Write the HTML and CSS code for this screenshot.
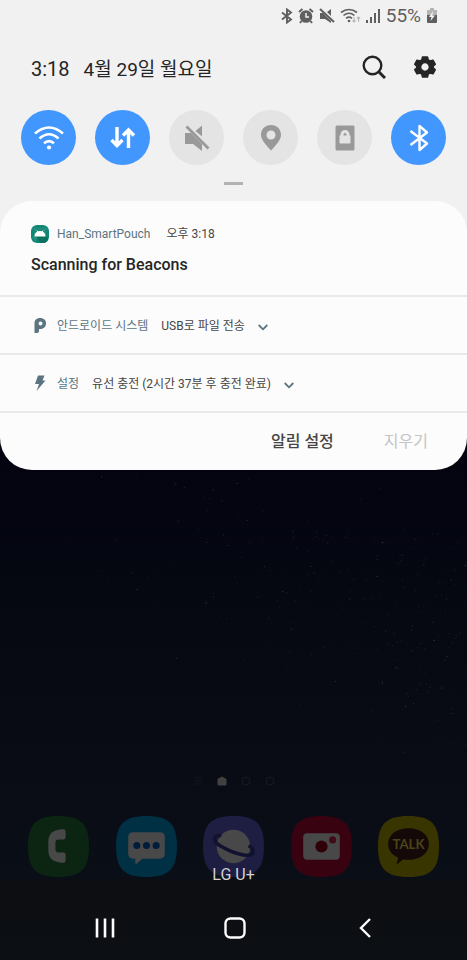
FILE: index.html
```html
<!DOCTYPE html>
<html lang="ko">
<head>
<meta charset="utf-8">
<meta name="viewport" content="width=device-width, initial-scale=1">
<title>알림</title>
<link rel="stylesheet" href="styles.css">
</head>
<body>
<header class="panel">
  <div class="status">
    <svg width="12" height="16" viewBox="0 0 12 16" fill="none" stroke="currentColor" stroke-width="1.9"><path d="M1 4.5 10 11.5 6 14.5V1.5L10 4.5 1 11.5"/></svg>
    <svg width="16" height="16" viewBox="0 0 16 16"><circle cx="8" cy="8.500" r="6.300" fill="currentColor"/><path d="M1 4 4.500 1M15 4 11.500 1M3.500 13 2 15M12.500 13 14 15" stroke="currentColor" stroke-width="2"/><path d="M8 5V9H11" fill="none" stroke="#f1f1f1" stroke-width="1.500"/></svg>
    <svg width="16" height="16" viewBox="0 0 16 16"><path d="M1 5H4L12 13V15L6 11H1ZM8 4 12 1V8Z" fill="currentColor"/><path d="M1 1 15 14" stroke="currentColor" stroke-width="2"/></svg>
    <svg width="21" height="16" viewBox="0 0 21 16" fill="none" stroke="currentColor" stroke-width="1.600"><path d="M1 4.500Q9 -1.500 17 4.500M3.500 7.500Q9 3 14.500 7.500M6 10.300Q9 8 12 10.300"/><circle cx="9" cy="13" r="1.300" fill="currentColor" stroke="none"/><path class="faint" stroke-width="1.100" d="M14 9V14M12.500 12.500 14 14 15.500 12.500M18.500 14V9M17 10.500 18.500 9 20 10.500"/></svg>
    <svg width="15" height="16" viewBox="0 0 15 16" fill="currentColor"><path d="M0 12H2V15H0ZM4 9H6V15H4ZM8 5H10V15H8ZM12 1H14V15H12Z"/></svg>
    <span class="battery-level">55%</span>
    <svg width="12" height="16" viewBox="0 0 12 16"><path class="faint-fill" d="M4 0H8V2H11V8H1V2H4Z"/><path fill="currentColor" d="M1 7H11V14Q11 15 10 15H2Q1 15 1 14Z"/><path d="M7 3 3 9H5.500L4.500 13 9 7.500H6.500Z" fill="#f1f1f1"/></svg>
  </div>
  <div class="clock-row">
    <div class="clock-text">
      <time class="clock">3:18</time>
      <span class="date">4월 29일 월요일</span>
    </div>
    <button class="tool" aria-label="검색"><svg width="24" height="24" viewBox="0 0 24 24" fill="none" stroke="currentColor"><circle cx="10.500" cy="10.500" r="8.800" stroke-width="2.400"/><path d="M17 17 23 23" stroke-width="3"/></svg></button>
    <button class="tool" aria-label="설정"><svg width="24" height="24" viewBox="0 0 24 24"><path fill="currentColor" stroke="currentColor" stroke-width="1.500" stroke-linejoin="round" fill-rule="evenodd" d="M9.500 2H14.500L15.200 5 17 6 20 5.200 22.300 9.300 20.200 11.300V12.700L22.300 14.700 20 18.800 17 18 15.200 19 14.500 22H9.500L8.800 19 7 18 4 18.800 1.700 14.700 3.800 12.700V11.300L1.700 9.300 4 5.200 7 6 8.800 5ZM12 7.600A4.400 4.400 0 1 0 12 16.400 4.400 4.400 0 1 0 12 7.600Z"/></svg></button>
  </div>
  <div class="toggles">
    <button class="toggle on" aria-label="Wi-Fi" aria-pressed="true"><svg width="32" height="32" viewBox="0 0 32 32" fill="none" stroke="currentColor" stroke-width="2.500"><path d="M2 11.500Q16 -0.500 30 11.500M6.500 16.500Q16 8 25.500 16.500M11 21.300Q16 17 21 21.300"/><circle cx="16" cy="25.500" r="2.100" fill="currentColor" stroke="none"/></svg></button>
    <button class="toggle on" aria-label="모바일 데이터" aria-pressed="true"><svg width="32" height="32" viewBox="0 0 32 32" fill="none" stroke="currentColor" stroke-width="3.400"><path d="M10 5V23.500M4.500 18 10 23.500 15.500 18M21.500 26V8M16 13.500 21.500 8 27 13.500"/></svg></button>
    <button class="toggle" aria-label="무음" aria-pressed="false"><svg width="32" height="32" viewBox="0 0 32 32"><path fill="currentColor" d="M4 11H10L21 22V29L12 22H4ZM14.500 9 21 3.500V14.500Z"/><path d="M5.500 4.500 27.500 26.500" stroke="currentColor" stroke-width="2.800"/></svg></button>
    <button class="toggle" aria-label="위치" aria-pressed="false"><svg width="32" height="32" viewBox="0 0 32 32"><path fill="currentColor" fill-rule="evenodd" d="M16 3C10 3 6 7.200 6 13 6 18 12 24 16 28.500 20 24 26 18 26 13 26 7.200 22 3 16 3ZM16 8.500A4.500 4.500 0 1 1 16 17.500 4.500 4.500 0 1 1 16 8.500Z"/></svg></button>
    <button class="toggle" aria-label="화면 회전 잠금" aria-pressed="false"><svg width="32" height="32" viewBox="0 0 32 32"><rect x="6.500" y="3.500" width="19" height="25" rx="1.500" fill="currentColor"/><path fill="#e4e4e4" fill-rule="evenodd" d="M10.500 13.500H11.500V12.500A4.500 4.500 0 0 1 20.500 12.500V13.500H21.500V20.500Q21.500 21.500 20.500 21.500H11.500Q10.500 21.500 10.500 20.500ZM14.500 13.500H17.500V12.500A1.500 1.500 0 0 0 14.500 12.500Z"/></svg></button>
    <button class="toggle on" aria-label="블루투스" aria-pressed="true"><svg width="32" height="32" viewBox="0 0 32 32" fill="none" stroke="currentColor" stroke-width="2.400" stroke-linejoin="round"><path d="M7.500 9 24 21.500 16.500 28V4L24 10.500 7.500 23"/></svg></button>
  </div>
  <div class="handle"></div>
</header>

<div class="shade">
<main class="card">
  <article class="notice notice-open">
    <div class="line">
      <svg class="app-icon" width="18" height="18" viewBox="0 0 18 18"><rect width="18" height="18" rx="6" fill="#108674"/><path d="M1 4H17M4 1V17M14 1V17M1 13H17" stroke="#3d9b8d" stroke-width=".6"/><path d="M13 10 17 13V15L14 18H9L5 11Z" fill="#0b705f"/><path d="M3.500 11.500Q3.500 7.800 6.200 6.700L5.400 5 7.300 6.200Q9 5.800 10.700 6.200L12.600 5 11.800 6.700Q14.500 7.800 14.500 11.500Z" fill="#fff"/></svg>
      <span class="app">Han_SmartPouch</span>
      <span class="info">오후 3:18</span>
    </div>
    <h1 class="title">Scanning for Beacons</h1>
  </article>
  <article class="notice">
    <div class="line">
      <svg class="app-icon" width="18" height="18" viewBox="0 0 18 18"><path fill="currentColor" fill-rule="evenodd" d="M9 1C13 1 15 3.300 15 6.500S12.500 12 9.500 12H8V14Q8 16 6 16H3.500V6.500C3.500 3.300 5.500 1 9 1ZM9.500 4.500A2 2 0 1 0 9.500 8.500 2 2 0 1 0 9.500 4.500Z"/></svg>
      <span class="app">안드로이드 시스템</span>
      <span class="info">USB로 파일 전송</span>
      <button class="expand" aria-label="펼치기"><svg width="10" height="7" viewBox="0 0 10 7" fill="none" stroke="currentColor" stroke-width="1.800"><path d="M.7 1 5 5.300 9.300 1"/></svg></button>
    </div>
  </article>
  <article class="notice">
    <div class="line">
      <svg class="app-icon" width="18" height="18" viewBox="0 0 18 18"><path fill="currentColor" d="M7 .5H13.500L11.500 5.500H14.500L5.500 16 8 9H4Z"/></svg>
      <span class="app">설정</span>
      <span class="info">유선 충전 (2시간 37분 후 충전 완료)</span>
      <button class="expand" aria-label="펼치기"><svg width="10" height="7" viewBox="0 0 10 7" fill="none" stroke="currentColor" stroke-width="1.800"><path d="M.7 1 5 5.300 9.300 1"/></svg></button>
    </div>
  </article>
  <footer class="actions">
    <button class="action">알림 설정</button>
    <button class="action" disabled>지우기</button>
  </footer>
</main>
</div>

<section class="home">
  <svg class="stars" viewBox="0 0 467 426" preserveAspectRatio="xMidYMin slice" aria-hidden="true"></svg>
  <div class="pages">
    <svg width="10" height="10" viewBox="0 0 10 10" stroke="#12161d"><path d="M1 2H9M1 5H9M1 8H9"/></svg>
    <svg width="10" height="10" viewBox="0 0 10 10"><path fill="#414141" d="M5 .5 9.500 3V8.500Q9.500 9.500 8.500 9.500H1.500Q.5 9.500 .5 8.500V3Z"/></svg>
    <svg width="10" height="10" viewBox="0 0 10 10" fill="none" stroke="#171a21"><circle cx="5" cy="5" r="4"/></svg>
    <svg width="10" height="10" viewBox="0 0 10 10" fill="none" stroke="#171a21"><circle cx="5" cy="5" r="4"/></svg>
  </div>
  <div class="dock">
    <svg width="61" height="61" viewBox="0 0 60 60" role="img" aria-label="전화"><path fill="#0c2513" d="M30 0C52 0 60 8 60 30S52 60 30 60 0 52 0 30 8 0 30 0Z"/><path fill="#484848" d="M33 13H35Q37 13 37 15V21Q37 23 35 23H30Q27 23 27 26V33Q27 36 30 36H35Q37 36 37 38V44Q37 46 35 46H33Q20 45 20 34V25Q20 14 33 13Z"/></svg>
    <svg width="61" height="61" viewBox="0 0 60 60" role="img" aria-label="메시지"><path fill="#003044" d="M30 0C52 0 60 8 60 30S52 60 30 60 0 52 0 30 8 0 30 0Z"/><path fill="#484848" d="M17 16H43Q48 16 48 21V37Q48 42 43 42H26L19 48V42H17Q12 42 12 37V21Q12 16 17 16Z"/><g fill="#001c3c"><circle cx="20.500" cy="29" r="3.500"/><circle cx="30" cy="29" r="3.500"/><circle cx="39.500" cy="29" r="3.500"/></g></svg>
    <svg width="61" height="61" viewBox="0 0 60 60" role="img" aria-label="인터넷"><path fill="#1e1d42" d="M30 0C52 0 60 8 60 30S52 60 30 60 0 52 0 30 8 0 30 0Z"/><circle cx="30" cy="30" r="16.500" fill="#484848"/><path d="M18 19C8 19 10 26 20 31 32 38 48 41 49 36 50 33 48 31 45 29" fill="none" stroke="#111130" stroke-width="3.500"/></svg>
    <svg width="61" height="61" viewBox="0 0 60 60" role="img" aria-label="카메라"><path fill="#380210" d="M30 0C52 0 60 8 60 30S52 60 30 60 0 52 0 30 8 0 30 0Z"/><rect x="12" y="17" width="36" height="26" rx="4" fill="#484848"/><g fill="#300008"><circle cx="30" cy="30" r="6"/><circle cx="41" cy="23.500" r="3.500" fill="#400a18"/></g></svg>
    <svg width="61" height="61" viewBox="0 0 60 60" role="img" aria-label="카카오톡"><path fill="#393500" d="M30 0C52 0 60 8 60 30S52 60 30 60 0 52 0 30 8 0 30 0Z"/><path fill="#140808" d="M30 12C42 12 50 18.500 50 27.500S42 43 30 43Q27 43 25 42.500L18 48 20 41C13.500 38 10 33.500 10 27.500 10 18.500 18 12 30 12Z"/><text class="talk" x="30" y="32" text-anchor="middle">TALK</text></svg>
    <span class="carrier">LG U+</span>
  </div>
  <nav class="nav">
    <button aria-label="최근 앱"><svg width="24" height="24" viewBox="0 0 24 24" stroke="currentColor" stroke-width="2.600"><path d="M4 2.500V21.500M12 2.500V21.500M20 2.500V21.500"/></svg></button>
    <button aria-label="홈"><svg width="24" height="24" viewBox="0 0 24 24" fill="none" stroke="currentColor" stroke-width="2.400"><rect x="2.500" y="2.500" width="19" height="19" rx="5"/></svg></button>
    <button aria-label="뒤로"><svg width="24" height="24" viewBox="0 0 24 24" fill="none" stroke="currentColor" stroke-width="2.400"><path d="M17 3 8 12 17 21"/></svg></button>
  </nav>
</section>
<script src="stars.js"></script>
</body>
</html>
```
FILE: styles.css
```css
* { box-sizing: border-box; }

body {
  margin: 0;
  min-height: 100vh;
  display: flex;
  flex-direction: column;
  background: #03040f;
  color: #252525;
  font-family: Roboto, "Noto Sans CJK KR", sans-serif;
}

svg { display: block; flex: none; }

button {
  display: grid;
  place-items: center;
  margin: 0;
  padding: 0;
  border: 0;
  background: none;
  color: inherit;
  font: inherit;
}

.panel { padding-bottom: 16px; background: #f1f1f1; }

.status {
  display: flex;
  justify-content: flex-end;
  align-items: center;
  gap: 5px;
  height: 32px;
  padding-right: 29px;
  color: #5f5f5f;
}
.faint { stroke: #b5b5b5; }
.faint-fill { fill: #b5b5b5; }
.battery-level { font-size: 19px; line-height: 32px; }

.clock-row {
  display: flex;
  align-items: center;
  height: 70px;
  padding: 0 30px 0 31px;
}
.clock-text {
  display: flex;
  align-items: baseline;
  gap: 14px;
  margin-right: auto;
}
.clock { font-size: 20px; }
.date { font-size: 19px; }
.tool { width: 24px; height: 24px; margin-left: 27px; }

.toggles {
  display: flex;
  justify-content: space-between;
  padding: 8px 21px 0;
}
.toggle {
  width: 55px;
  height: 55px;
  border-radius: 50%;
  background: #e4e4e4;
  color: #999;
}
.toggle.on { background: #4297ff; color: #fff; }

.handle {
  width: 19px;
  height: 3px;
  margin: 17px auto 0;
  background: #b2b2b2;
}

.shade { background: linear-gradient(#f1f1f1 50%, #03040f 50%); }
.card {
  border-radius: 32px;
  background: #fcfcfc;
}

.notice {
  display: flex;
  flex-direction: column;
  justify-content: center;
  height: 58px;
  padding: 2px 31px 0;
  border-bottom: 2px solid #e9e9e9;
}
.notice-open { height: 96px; padding-top: 4px; gap: 10px; }
.line {
  display: flex;
  align-items: center;
  font-size: 12px;
  line-height: 20px;
  color: #5b7480;
}
.app-icon { margin-right: 8px; }
.info { margin-left: 13px; color: #454545; }
.notice-open .info { margin-left: 16px; }
.expand { margin-left: 13px; padding-top: 2px; }
.title {
  margin: 0;
  font-size: 16px;
  line-height: 22px;
  font-weight: 500;
}

.actions {
  display: flex;
  justify-content: flex-end;
  align-items: center;
  gap: 50px;
  height: 57px;
  padding: 0 39px 4px 0;
}
.action { font-size: 16px; font-weight: 500; color: #454545; }
.action:disabled { color: #c4c4c4; font-weight: 400; }

.home {
  position: relative;
  flex: 1;
  min-height: 490px;
  display: flex;
  flex-direction: column;
  justify-content: flex-end;
  background: linear-gradient(#03040f, #090c15 64%, #0a0e17 83%, #0c0e12 84%, #0c0f13);
}
.stars {
  position: absolute;
  inset: 0;
  width: 100%;
  height: 426px;
  fill: #8a929c;
}
.pages {
  display: flex;
  justify-content: center;
  gap: 14px;
  padding-bottom: 30px;
}
.dock {
  position: relative;
  display: flex;
  justify-content: space-between;
  padding: 0 28px 19px;
}
.talk {
  font-family: Lato, sans-serif;
  font-size: 13px;
  font-weight: 700;
  fill: #4a4618;
}
.carrier {
  position: absolute;
  inset: auto 0 11px;
  text-align: center;
  font-size: 16px;
  line-height: 20px;
  color: #d2d2d6;
}
.nav {
  position: relative;
  display: flex;
  justify-content: center;
  gap: 106px;
  height: 64px;
  padding-left: 3px;
  color: #fcfcfc;
}
```
FILE: stars.js
```js
// Scatters a faint diagonal band of stars over the wallpaper.
const sky = document.querySelector('.stars');
let seed = 29;
const random = () => (seed = (seed * 16807) % 2147483647) / 2147483647;

for (let i = 0; i < 620; i++) {
  const x = 60 + 407 * Math.sqrt(random());
  const spread = (random() + random() + random() - 1.5) * 115;
  const y = 22 + (x - 100) * 0.41 + spread;
  if (y < 6) continue;
  const star = document.createElementNS('http://www.w3.org/2000/svg', 'circle');
  star.setAttribute('cx', x.toFixed(1));
  star.setAttribute('cy', y.toFixed(1));
  star.setAttribute('r', (0.4 + random() * 0.4).toFixed(2));
  star.setAttribute('opacity', (0.06 + random() * random() * 0.25).toFixed(2));
  sky.append(star);
}
```
